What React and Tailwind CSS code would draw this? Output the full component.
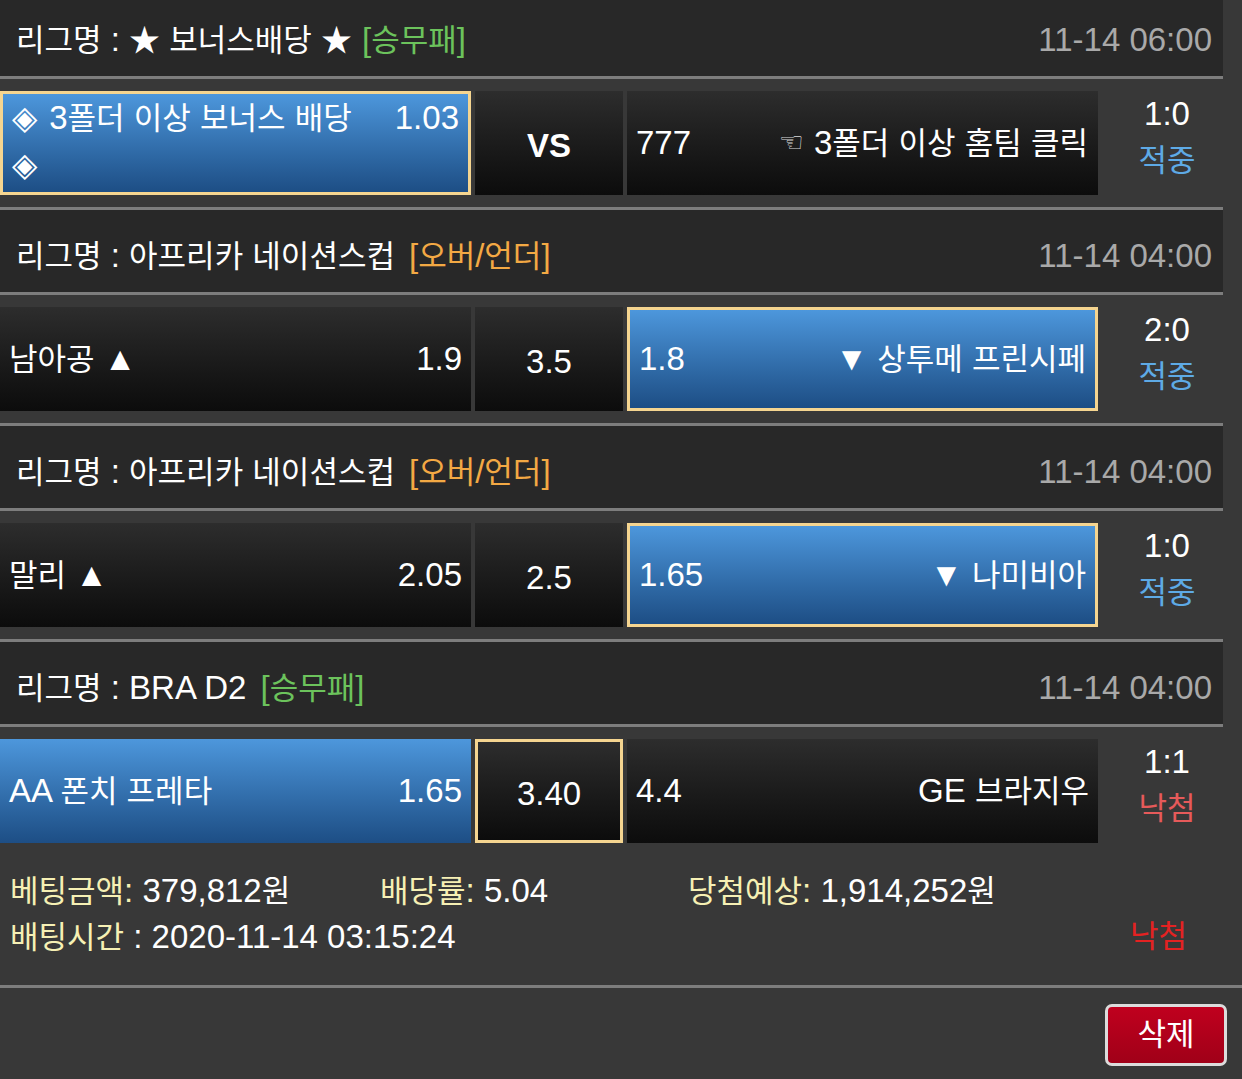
import React from 'react';

const FONT = "font-['Liberation_Sans','Noto_Sans_CJK_KR',sans-serif]";

// dark / blue cell skins
const DARK = 'bg-linear-to-b from-[#2d2d2d] to-[#0c0c0c]';
const BLUE = 'bg-linear-to-b from-[#4d97dc] to-[#1d4e85]';
const PICK = 'border-[3px] border-[#f5d590]';

// Latin glyphs run a touch larger than the Hangul ones in the source page,
// so Hangul runs get their own size.
function T({ children }) {
  const parts = String(children).split(/([\uAC00-\uD7A3★]+)/);
  return (
    <span>
      {parts.map((p, i) =>
        /[\uAC00-\uD7A3★]/.test(p) ? (
          <span key={i} className="text-[31px]">{p}</span>
        ) : (
          <React.Fragment key={i}>{p}</React.Fragment>
        )
      )}
    </span>
  );
}

const blocks = [
  {
    league: '★ 보너스배당 ★',
    tag: '[승무패]',
    tagColor: 'text-[#6cc35c]',
    time: '11-14 06:00',
    score: '1:0',
    result: 'hit',
    bonus: true,
  },
  {
    league: '아프리카 네이션스컵',
    tag: '[오버/언더]',
    tagColor: 'text-[#f3a944]',
    time: '11-14 04:00',
    home: '남아공 ▲',
    homeOdds: '1.9',
    mid: '3.5',
    awayOdds: '1.8',
    away: '▼ 상투메 프린시페',
    pick: 'away',
    score: '2:0',
    result: 'hit',
  },
  {
    league: '아프리카 네이션스컵',
    tag: '[오버/언더]',
    tagColor: 'text-[#f3a944]',
    time: '11-14 04:00',
    home: '말리 ▲',
    homeOdds: '2.05',
    mid: '2.5',
    awayOdds: '1.65',
    away: '▼ 나미비아',
    pick: 'away',
    score: '1:0',
    result: 'hit',
  },
  {
    league: 'BRA D2',
    tag: '[승무패]',
    tagColor: 'text-[#6cc35c]',
    time: '11-14 04:00',
    home: 'AA 폰치 프레타',
    homeOdds: '1.65',
    mid: '3.40',
    awayOdds: '4.4',
    away: 'GE 브라지우',
    pick: 'mid',
    homeBlue: true,
    score: '1:1',
    result: 'lose',
    last: true,
  },
];

function Divider() {
  return <div className="h-[3px] w-[1223px] bg-[#7d7d7d]" />;
}

function Result({ score, result }) {
  return (
    <div className="w-[138px] h-[104px] flex flex-col items-center justify-center pb-[12px] leading-[47px]">
      <span className="text-white">{score}</span>
      {result === 'hit' ? (
        <span className="text-[#5eaae6] text-[31px]">적중</span>
      ) : (
        <span className="text-[#e65a5a] text-[31px]">낙첨</span>
      )}
    </div>
  );
}

function BonusRow() {
  return (
    <div className="flex gap-[4px]">
      <div className={`w-[471px] h-[104px] ${BLUE} ${PICK} flex items-start justify-between pt-px pl-[9px] pr-[9px] leading-[46px] text-white`}>
        <span>
          <span className="mr-[3px]">◈</span>
          <T> 3폴더 이상 보너스 배당</T>
          <br />◈
        </span>
        <span>1.03</span>
      </div>
      <div className={`w-[148px] h-[104px] ${DARK} flex items-center justify-center pt-[6px] font-bold text-white`}>
        VS
      </div>
      <div className={`w-[471px] h-[104px] ${DARK} flex items-center justify-between pl-[9px] pr-[10px] text-white`}>
        <span>777</span>
        <span className="flex items-center">
          <span className="text-[28px] text-[#d8d8d8] mr-[10px] font-['DejaVu_Sans',sans-serif]">☜</span>
          <T>3폴더 이상 홈팀 클릭</T>
        </span>
      </div>
    </div>
  );
}

function MatchRow({ b }) {
  const homeCls = b.homeBlue ? BLUE : DARK;
  return (
    <div className="flex gap-[4px]">
      <div className={`w-[471px] h-[104px] ${homeCls} ${b.pick === 'home' ? PICK : ''} flex items-center justify-between pl-[9px] pr-[9px] text-white`}>
        <T>{b.home}</T>
        <span>{b.homeOdds}</span>
      </div>
      <div className={`w-[148px] h-[104px] ${DARK} ${b.pick === 'mid' ? PICK : ''} flex items-center justify-center pt-[6px] text-white`}>
        {b.mid}
      </div>
      <div className={`w-[471px] h-[104px] ${b.pick === 'away' ? `${BLUE} ${PICK}` : DARK} flex items-center justify-between pl-[9px] pr-[9px] text-white`}>
        <span>{b.awayOdds}</span>
        <T>{b.away}</T>
      </div>
    </div>
  );
}

function Block({ b }) {
  return (
    <div>
      <div className="h-[82px] w-[1223px] bg-[#282828] flex items-center justify-between pl-4 pr-[11px] pt-[9px]">
        <div className="text-white">
          <T>{`리그명 : ${b.league}`}</T>
          <span className={`${b.bonus ? 'ml-[10px]' : 'ml-[14px]'} ${b.tagColor}`}><T>{b.tag}</T></span>
        </div>
        <div className="text-[#a9a9a9]">{b.time}</div>
      </div>
      <Divider />
      <div className={`${b.last ? 'h-[118px]' : 'h-[128px]'} pt-[12px] flex`}>
        {b.bonus ? <BonusRow /> : <MatchRow b={b} />}
        <Result score={b.score} result={b.result} />
      </div>
      {!b.last && <Divider />}
    </div>
  );
}

export default function App() {
  return (
    <div className={`min-h-screen bg-[#383838] overflow-hidden ${FONT} text-[33px]`}>
      <div className="-mt-[6px]">
        {blocks.map((b, i) => (
          <Block key={i} b={b} />
        ))}
      </div>

      {/* Bet summary */}
      <div className="pt-[23px] pb-[25px] pl-[10px] pr-[55px] leading-[45px]">
        <div className="flex">
          <div className="w-[370px]">
            <span className="text-[#f6f0b4]"><T>베팅금액:</T></span>
            <span className="text-white"><T> 379,812원</T></span>
          </div>
          <div className="w-[308px]">
            <span className="text-[#f6f0b4]"><T>배당률:</T></span>
            <span className="text-white"> 5.04</span>
          </div>
          <div>
            <span className="text-[#f6f0b4]"><T>당첨예상:</T></span>
            <span className="text-white"><T> 1,914,252원</T></span>
          </div>
        </div>
        <div className="flex justify-between">
          <div>
            <span className="text-[#f6f0b4] text-[31px]">배팅시간</span>
            <span className="text-white"> : 2020-11-14 03:15:24</span>
          </div>
          <span className="text-[#e42222] text-[31px]">낙첨</span>
        </div>
      </div>
      <div className="h-[3px] w-full bg-[#7d7d7d]" />

      <div className="flex justify-end pt-[16px] pr-[15px]">
        <button className="w-[122px] h-[62px] rounded-[7px] border-[3px] border-[#dcdcdc] bg-linear-to-b from-[#c0001e] to-[#a00018] text-white text-[31px] flex items-center justify-center">
          삭제
        </button>
      </div>
    </div>
  );
}
